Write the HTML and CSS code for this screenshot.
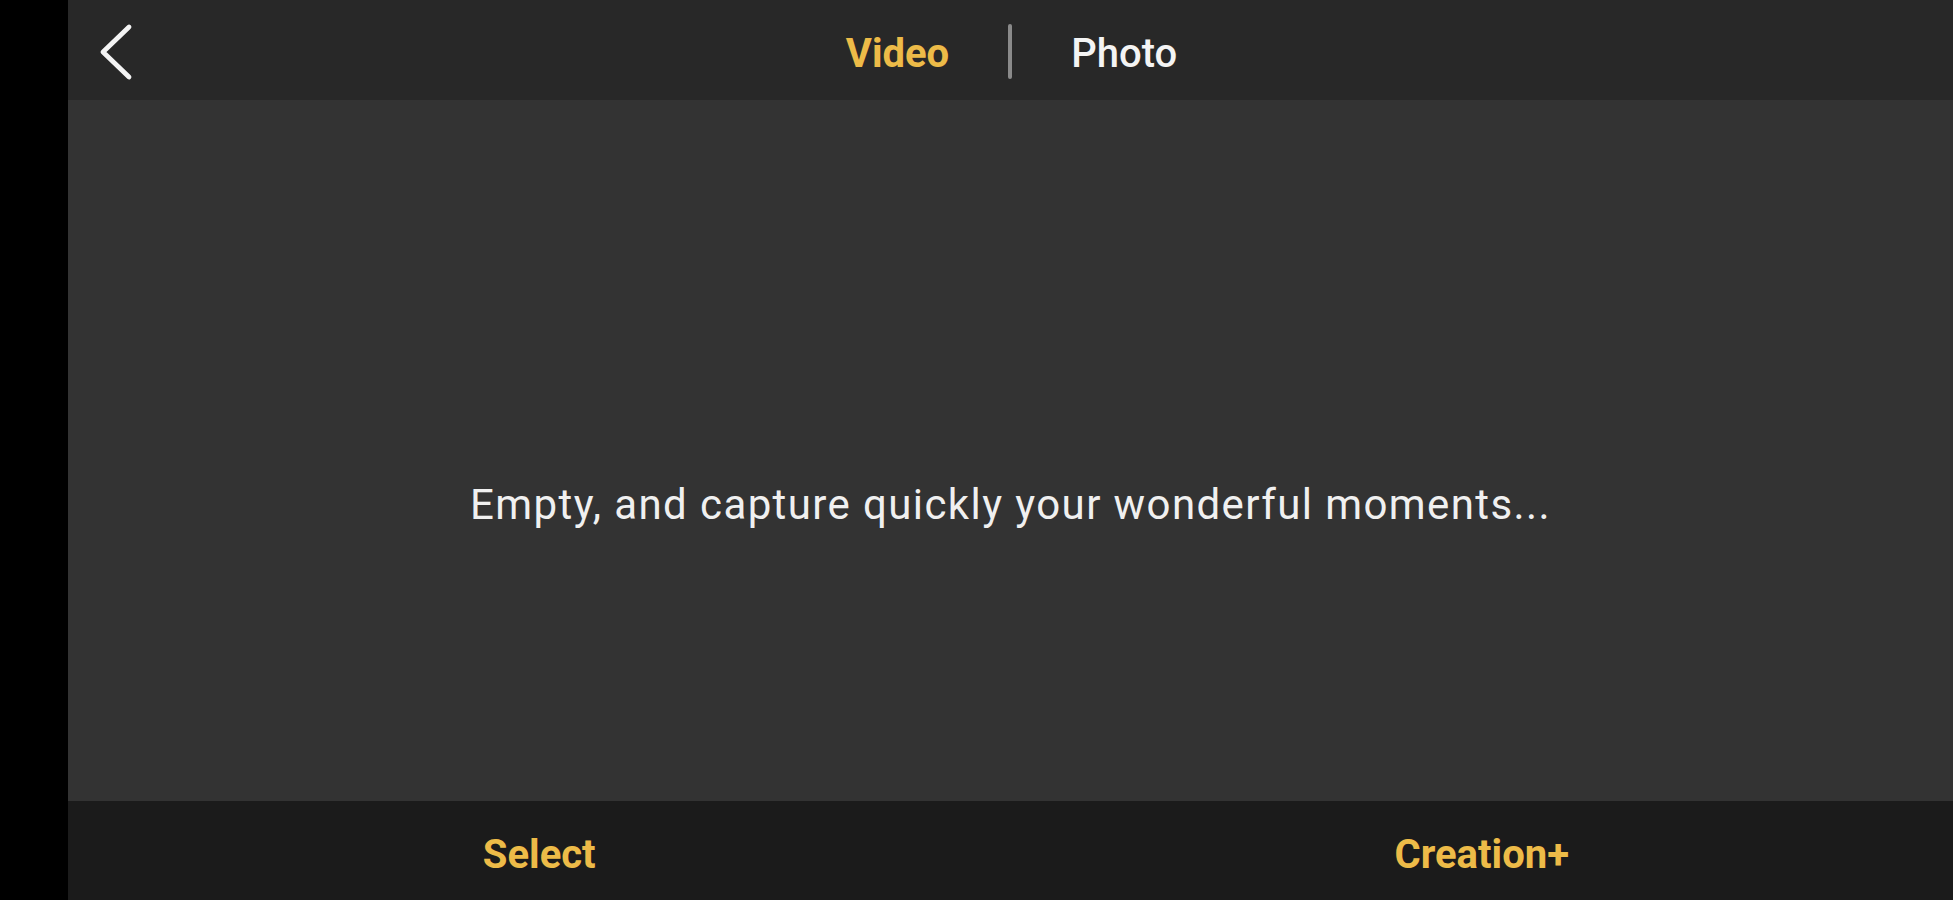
FILE: index.html
```html
<!DOCTYPE html>
<html lang="en">
<head>
<meta charset="utf-8">
<title>Album</title>
<link rel="stylesheet" href="styles.css">
</head>
<body>
<div class="app">
  <div class="side"></div>
  <div class="screen">
    <header class="topbar">
      <div class="back">
        <svg width="36" height="60" viewBox="0 0 36 60" aria-hidden="true">
          <path d="M31 6 L5 31 L31 56" fill="none" stroke="#f4f4f4" stroke-width="4.8" stroke-linecap="round" stroke-linejoin="round"/>
        </svg>
      </div>
      <nav class="tabs">
        <span class="tab active">Video</span>
        <span class="divider"></span>
        <span class="tab">Photo</span>
      </nav>
      <div></div>
    </header>
    <main class="content">
      <p class="empty">Empty, and capture quickly your wonderful moments...</p>
    </main>
    <footer class="bottombar">
      <span class="action">Select</span>
      <span class="action">Creation+</span>
    </footer>
  </div>
</div>
</body>
</html>
```

FILE: styles.css
```css
html, body {
  margin: 0;
  padding: 0;
  height: 100%;
  background: #000;
}

body {
  font-family: Roboto, "Liberation Sans", Arial, sans-serif;
}

.app {
  display: flex;
  height: 900px;
  width: 100%;
}

.side {
  width: 68px;
  flex: 0 0 68px;
  background: #000;
}

.screen {
  flex: 1;
  display: flex;
  flex-direction: column;
}

.topbar {
  height: 100px;
  flex: 0 0 100px;
  background: #282828;
  display: grid;
  grid-template-columns: 1fr auto 1fr;
  align-items: center;
}

.back {
  padding-left: 30px;
  padding-top: 2px;
  display: flex;
  align-items: center;
}

.back svg {
  display: block;
}

.tabs {
  display: flex;
  align-items: center;
  gap: 59px;
  padding-left: 2px;
}

.tab {
  font-size: 40px;
  font-weight: 500;
  color: #f4f4f4;
  line-height: 1;
  padding-top: 8px;
}

.tab.active {
  font-weight: 700;
  color: #edbb48;
}

.divider {
  width: 4px;
  height: 55px;
  margin-top: 2px;
  background: #8a8a8a;
  border-radius: 2px;
}

.content {
  flex: 1;
  background: #333333;
  display: flex;
  align-items: center;
  justify-content: center;
  padding-top: 108px;
  box-sizing: border-box;
}

.empty {
  margin: 0;
  font-size: 42px;
  color: #f0f0f0;
  letter-spacing: 1.4px;
}

.bottombar {
  height: 99px;
  flex: 0 0 99px;
  background: #1b1b1b;
  display: grid;
  grid-template-columns: 1fr 1fr;
  align-items: center;
  justify-items: center;
}

.action {
  font-size: 40px;
  font-weight: 700;
  color: #edbb48;
  line-height: 1;
  padding-top: 8px;
}
```
